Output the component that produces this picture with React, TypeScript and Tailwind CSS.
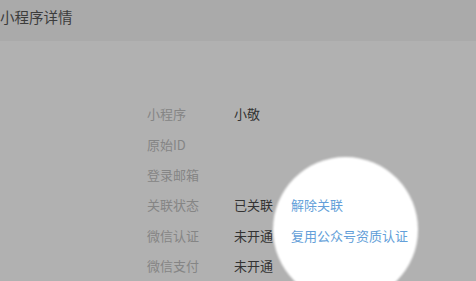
const rows: { label: string; value?: string; link?: string }[] = [
  { label: "小程序", value: "小敬" },
  { label: "原始ID" },
  { label: "登录邮箱" },
  { label: "关联状态", value: "已关联", link: "解除关联" },
  { label: "微信认证", value: "未开通", link: "复用公众号资质认证" },
  { label: "微信支付", value: "未开通" },
];

export default function App() {
  return (
    <div className="relative h-[281px] w-[476px] overflow-hidden bg-[#b1b1b1] font-['Noto_Sans_CJK_SC',sans-serif]">
      <div className="flex h-[41px] items-center bg-[#aaaaaa] pb-[7px] text-[14.5px] text-[#3c3c3c]">
        小程序详情
      </div>

      {/* spotlight */}
      <div className="absolute left-[273px] top-[157px] h-[145px] w-[145px] rounded-full bg-white blur-[1px]" />

      <div className="relative flex flex-col pl-[147px] pt-[58px] text-[13px]">
        {rows.map((r) => (
          <div key={r.label} className="flex h-[30.3px] items-center">
            <span className="w-[87px] text-[#858585]">{r.label}</span>
            <span className="w-[57px] text-[#333333]">{r.value}</span>
            {r.link && <span className="text-[#649fd9]">{r.link}</span>}
          </div>
        ))}
      </div>
    </div>
  );
}
